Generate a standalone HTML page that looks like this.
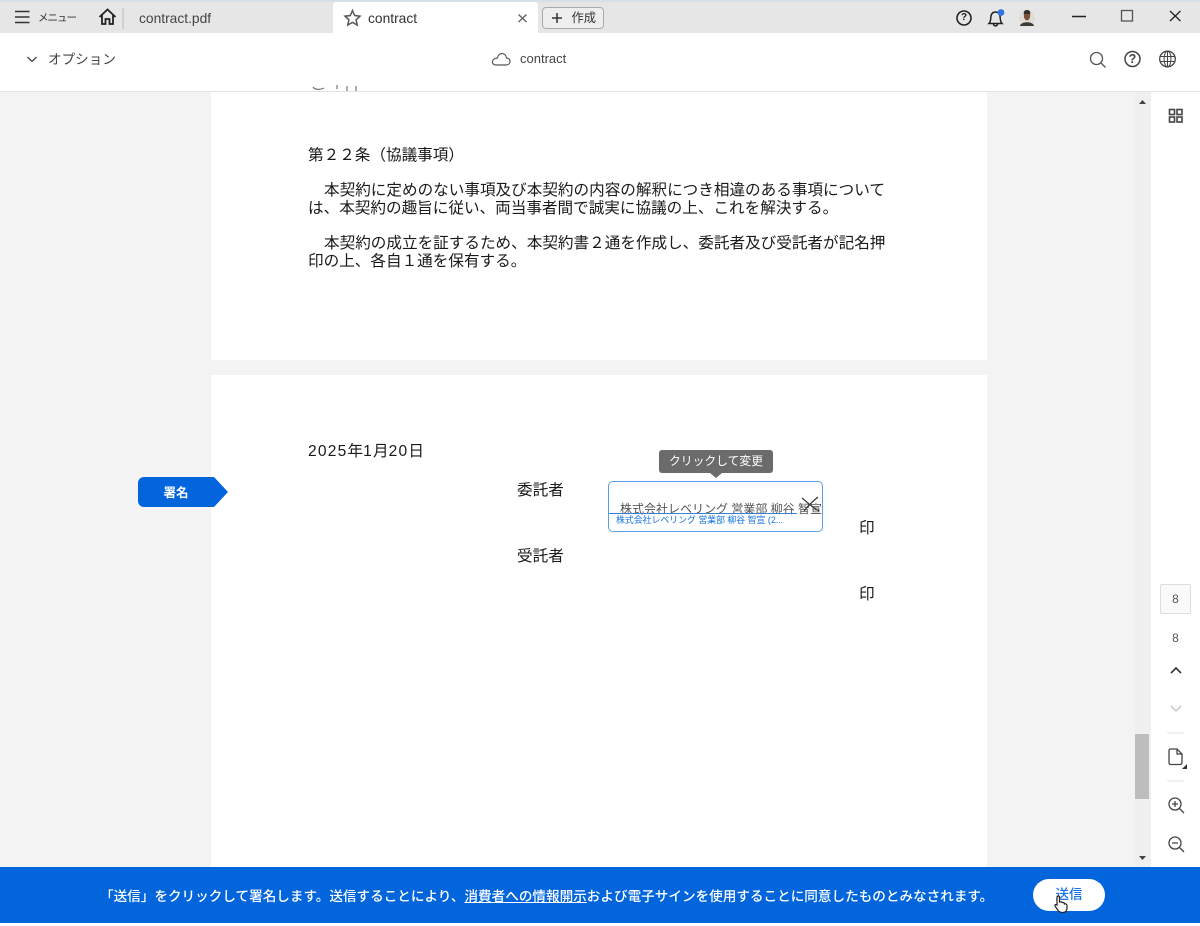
<!DOCTYPE html>
<html lang="ja"><head><meta charset="utf-8"><title>contract</title>
<style>
html,body{margin:0;padding:0;width:1200px;height:926px;overflow:hidden;background:#fff}
body{font-family:"Liberation Sans","Noto Sans CJK JP",sans-serif;color:#222}
#w{position:relative;width:1200px;height:926px;overflow:hidden;filter:blur(.3px)}
.a{position:absolute;white-space:nowrap}
.b{position:absolute}
svg{position:absolute;overflow:visible;fill:none}
.t{font-size:15.6px;line-height:18px;color:#1a1a1a}
.d{letter-spacing:1.2px}
</style></head><body><div id="w">
<!-- title bar -->
<div class="b" style="left:0;top:0;width:1200px;height:33px;background:#e6e6e6;border-top:2px solid #d6e0e8;box-sizing:border-box"></div>
<div class="b" style="left:333px;top:2px;width:205px;height:31px;background:#fff;border-radius:3px 3px 0 0"></div>
<div class="b" style="left:0;top:33px;width:1200px;height:58px;background:#fff"></div>
<div class="b" style="left:0;top:91px;width:1200px;height:1px;background:#e4e4e4"></div>

<svg style="left:0;top:0" width="1200" height="92" stroke="#333" stroke-width="1.5">
<path d="M15 11.5H29.5M15 17H29.5M15 22.5H29.5"/>
<path d="M99.5 17L107.5 9.5L115.5 17M102 15V24H105.5V19H109.5V24H113V15" stroke="#222" stroke-width="1.8"/>
<path d="M123 8V29" stroke="#bbb" stroke-width="1"/>
<path d="M352.5 10.5L354.7 15.5L360 16.2L356.1 19.8L357.2 25L352.5 22.4L347.8 25L348.9 19.8L345 16.2L350.3 15.5Z" stroke="#555"/>
<path d="M518.5 14.5L526.5 22M526.5 14.5L518.5 22" stroke="#666" stroke-width="1.4"/>
<circle cx="964" cy="18" r="7" stroke="#222" stroke-width="1.6"/>
<path d="M989 23.5C991 21.5 990.5 19 991 16C991.5 13.5 993 12 995.5 12C998 12 999.5 13.5 1000 16C1000.5 19 1000 21.5 1002 23.5ZM993.5 24C993.5 26.5 997.5 26.5 997.5 24" stroke="#222" stroke-width="1.5"/>
<circle cx="1001" cy="12.5" r="3.4" fill="#2f78e4" stroke="none"/>
<circle cx="1027" cy="18" r="8" fill="#e0dcd6" stroke="none"/>
<path d="M1020 26C1020.5 21 1033.5 21 1034 26Z" fill="#3e3a34" stroke="none"/>
<ellipse cx="1027" cy="15.5" rx="3.2" ry="5" fill="#7a5038" stroke="none"/>
<path d="M1027 10C1024 10 1023.5 12 1023.8 14H1030.2C1030.5 12 1030 10 1027 10Z" fill="#33302c" stroke="none"/>
<path d="M1072 16.5H1086" stroke="#222" stroke-width="1.5"/>
<rect x="1121.5" y="10.5" width="11" height="10.5" stroke="#555" stroke-width="1.3"/>
<path d="M1170 11L1180.5 21M1180.5 11L1170 21" stroke="#222" stroke-width="1.3"/>
<path d="M27.5 57L32 61.5L36.5 57" stroke="#444" stroke-width="1.3"/>
<path d="M496 65H506C511 65 511.5 58.5 506.5 58C505.5 52 498.5 52 497.5 58C491 58.5 491 65 496 65Z" stroke="#555" stroke-width="1.2"/>
<circle cx="1096.5" cy="58.5" r="6" stroke="#555" stroke-width="1.3"/><path d="M1101 63L1105.5 67.5" stroke="#555" stroke-width="1.3"/>
<circle cx="1132.5" cy="59" r="7.5" stroke="#444" stroke-width="1.5"/>
<circle cx="1167.5" cy="59" r="7.8" stroke="#444" stroke-width="1.3"/>
<ellipse cx="1167.5" cy="59" rx="3.5" ry="7.8" stroke="#444" stroke-width="1"/>
<path d="M1160 56.5H1175M1160 61.5H1175M1167.5 51.5V66.5" stroke="#444" stroke-width="1"/>
</svg>
<div class="a" style="left:38px;top:10px;font-size:10.5px;line-height:16px;letter-spacing:-1px;color:#333">メニュー</div>
<div class="a" style="left:139px;top:10px;font-size:13.8px;line-height:17px;color:#444">contract.pdf</div>
<div class="a" style="left:368px;top:10px;font-size:13.8px;line-height:17px;color:#333">contract</div>
<div class="b" style="left:542px;top:7px;width:60px;height:20px;border:1px solid #aaa;border-radius:4px;background:#eee"></div>
<svg style="left:0;top:0" width="700" height="40" stroke="#333" stroke-width="1.5"><path d="M552 18H562M557 13V23"/></svg>
<div class="a" style="left:571.5px;top:10px;font-size:12.3px;line-height:16px;color:#333">作成</div>
<div class="a" style="left:960px;top:11px;width:8px;text-align:center;font-size:10px;font-weight:bold;line-height:14px;color:#222">?</div>
<div class="a" style="left:48px;top:51px;font-size:13.6px;line-height:17px;color:#444">オプション</div>
<div class="a" style="left:520px;top:51px;font-size:13px;line-height:16px;color:#444">contract</div>
<div class="a" style="left:1127px;top:51px;width:11px;text-align:center;font-size:12.5px;font-weight:bold;line-height:16px;color:#444">?</div>

<!-- document area -->
<div class="b" style="left:0;top:92px;width:1135px;height:775px;background:#f3f3f3"></div>
<div class="b" style="left:1135px;top:92px;width:16px;height:775px;background:#f0f0f0"></div>
<div class="b" style="left:211px;top:92px;width:776px;height:268px;background:#fff"></div>
<div class="b" style="left:211px;top:375px;width:776px;height:492px;background:#fff"></div>

<div class="a" style="left:312px;top:85px;width:50px;height:7px;overflow:hidden"><svg width="50" height="7" stroke="#777" stroke-width="1.2"><path d="M1 2C3 5 8 5 12 3M25 0V4M35 1V6M44 1V6"/></svg></div>
<div class="a t" style="left:308px;top:147px">第２２条（協議事項）</div>
<div class="a t" style="left:324px;top:182px">本契約に定めのない事項及び本契約の内容の解釈につき相違のある事項について</div>
<div class="a t" style="left:308px;top:200px">は、本契約の趣旨に従い、両当事者間で誠実に協議の上、これを解決する。</div>
<div class="a t" style="left:324px;top:235px">本契約の成立を証するため、本契約書２通を作成し、委託者及び受託者が記名押</div>
<div class="a t" style="left:308px;top:253px">印の上、各自１通を保有する。</div>
<div class="a t" style="left:308px;top:443px"><span class="d">2025</span>年<span class="d">1</span>月<span class="d">20</span>日</div>
<div class="a t" style="left:517px;top:482px">委託者</div>
<div class="a t" style="left:517px;top:548px">受託者</div>
<div class="a t" style="left:859px;top:520px">印</div>
<div class="a t" style="left:859px;top:586px">印</div>

<!-- signature tag -->
<div class="b" style="left:138px;top:477px;width:76px;height:30px;background:#0265dc;border-radius:6px 0 0 6px"></div>
<svg style="left:214px;top:477px" width="14" height="30"><path d="M0 0L14 15L0 30Z" fill="#0265dc"/></svg>
<div class="a" style="left:138px;top:485px;width:76px;text-align:center;font-size:12.5px;font-weight:bold;line-height:17px;color:#fff">署名</div>

<!-- tooltip + field -->
<div class="a" style="left:659px;top:450px;width:114px;height:23px;background:#6b6b6b;border-radius:3px;text-align:center;font-size:11.8px;line-height:22px;color:#fff">クリックして変更</div>
<svg style="left:710px;top:473px" width="12" height="5"><path d="M0 0H12L6 5Z" fill="#6b6b6b"/></svg>
<div class="b" style="left:608px;top:481px;width:213px;height:49px;border:1px solid #5b9ee8;border-radius:5px;background:#fff"></div>
<div class="a" style="left:620px;top:501px;width:203px;overflow:hidden;font-size:12px;line-height:16px;color:#555">株式会社レベリング 営業部 柳谷 智宣</div>
<div class="b" style="left:609px;top:513px;width:188px;height:1px;background:#3a7fd0"></div>
<div class="a" style="left:616px;top:514px;font-size:8.9px;line-height:12px;color:#1473e6">株式会社レベリング 営業部 柳谷 智宣 (2...</div>
<svg style="left:800px;top:495px" width="22" height="20" stroke="#333" stroke-width="1.2"><path d="M2 3C7 7 13 13 19 16M18 2C13 6 8 11 4 16"/></svg>

<!-- right rail -->
<div class="b" style="left:1151px;top:92px;width:48px;height:775px;background:#fff"></div>
<div class="b" style="left:1135px;top:734px;width:14px;height:65px;background:#bdbdbd"></div>
<svg style="left:0;top:0" width="1200" height="926" stroke="#555" stroke-width="1.3">
<path d="M1139 104H1146L1142.5 100Z" fill="#444" stroke="none"/>
<path d="M1139 856H1146L1142.5 860Z" fill="#444" stroke="none"/>
<g stroke="#444" stroke-width="1.6">
<rect x="1169.5" y="109.5" width="5" height="5"/><rect x="1177" y="109.5" width="5" height="5"/>
<rect x="1169.5" y="117" width="5" height="5"/><rect x="1177" y="117" width="5" height="5"/>
</g>
<path d="M1171 673L1176 668L1181 673" stroke="#333" stroke-width="1.6"/>
<path d="M1171 706L1176 711L1181 706" stroke="#ccc" stroke-width="1.6"/>
<path d="M1167 733H1184M1167 781H1184" stroke="#e3e3e3" stroke-width="1"/>
<path d="M1171 749H1177L1182 754V762Q1182 764.5 1180 764.5H1171Q1169 764.5 1169 762.5V751Q1169 749 1171 749ZM1177 749V754H1182" stroke="#444"/>
<path d="M1187 764V769H1182Z" fill="#333" stroke="none"/>
<circle cx="1175" cy="804" r="6" stroke="#444"/><path d="M1179.5 808.5L1184 813M1172 804H1178M1175 801V807" stroke="#444"/>
<circle cx="1175" cy="843" r="6" stroke="#444"/><path d="M1179.5 847.5L1184 852M1172 843H1178" stroke="#444"/>
</svg>
<div class="b" style="left:1160px;top:584px;width:29px;height:28px;border:1px solid #ddd;border-radius:2px;background:#fafafa;box-sizing:content-box"></div>
<div class="a" style="left:1160px;top:591px;width:31px;text-align:center;font-size:12px;line-height:16px;color:#555">8</div>
<div class="a" style="left:1160px;top:630px;width:31px;text-align:center;font-size:12px;line-height:16px;color:#555">8</div>

<!-- footer -->
<div class="b" style="left:0;top:867px;width:1200px;height:56px;background:#0265dc"></div>
<div class="a" style="left:100px;top:888px;font-size:13.6px;font-weight:500;line-height:18px;color:#fff">「送信」をクリックして署名します。送信することにより、<span style="text-decoration:underline">消費者への情報開示</span>および電子サインを使用することに同意したものとみなされます。</div>
<div class="b" style="left:1033px;top:879px;width:72px;height:32px;background:#fff;border-radius:16px"></div>
<div class="a" style="left:1033px;top:886px;width:72px;text-align:center;font-size:13.5px;font-weight:500;line-height:18px;color:#1473e6">送信</div>
<svg style="left:1053px;top:894px" width="16" height="20"><path d="M4 11V3.5C4 1.5 6.5 1.5 6.5 3.5V8.5C7 7.5 9 7.5 9 9C9.5 8 11.5 8.5 11.5 10C12.5 9.5 14 10 14 11.5V14C14 17 12 18.5 9.5 18.5C6.5 18.5 5.5 17 4 15L2 12C1.5 10.5 3 10 4 11Z" fill="#fff" stroke="#222" stroke-width="1.2"/></svg>
</div></body></html>
